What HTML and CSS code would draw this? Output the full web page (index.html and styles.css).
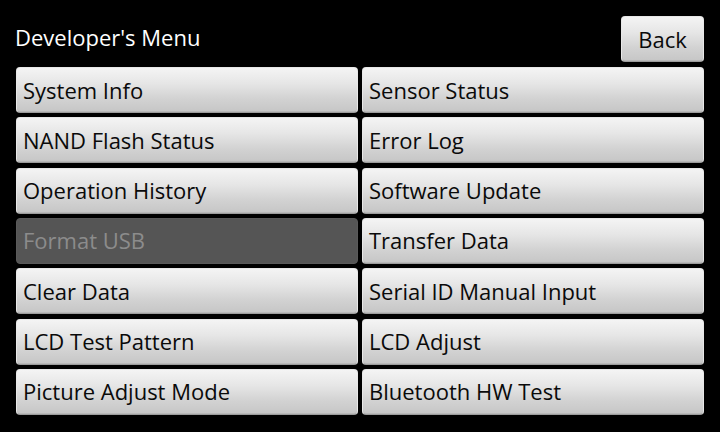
FILE: index.html
```html
<!DOCTYPE html>
<html>
<head>
<meta charset="utf-8">
<link rel="stylesheet" href="styles.css">
</head>
<body>
<div class="screen">
  <div class="header">
    <div class="title">Developer's Menu</div>
    <div class="btn back">Back</div>
  </div>
  <div class="grid">
    <div class="btn item">System Info</div>
    <div class="btn item">Sensor Status</div>
    <div class="btn item">NAND Flash Status</div>
    <div class="btn item">Error Log</div>
    <div class="btn item">Operation History</div>
    <div class="btn item">Software Update</div>
    <div class="btn item disabled">Format USB</div>
    <div class="btn item">Transfer Data</div>
    <div class="btn item">Clear Data</div>
    <div class="btn item">Serial ID Manual Input</div>
    <div class="btn item">LCD Test Pattern</div>
    <div class="btn item">LCD Adjust</div>
    <div class="btn item">Picture Adjust Mode</div>
    <div class="btn item">Bluetooth HW Test</div>
  </div>
</div>
</body>
</html>
```
FILE: styles.css
```css
html, body {
  margin: 0;
  padding: 0;
  background: #000;
}
body {
  width: 720px;
  height: 432px;
  overflow: hidden;
  font-family: "Open Sans", "Noto Sans", sans-serif;
}
.screen {
  padding: 16px 16px 0 16px;
  display: flex;
  flex-direction: column;
  gap: 5px;
}
.header {
  height: 46px;
  display: flex;
  align-items: center;
  justify-content: space-between;
}
.title {
  color: #fff;
  font-size: 22px;
  margin-left: -1px;
  margin-top: -4px;
}
.btn {
  box-sizing: border-box;
  border-radius: 4px;
  background: linear-gradient(to bottom, #f4f4f4 0%, #e6e6e6 35%, #d2d2d2 70%, #c6c6c6 100%);
  border: 1px solid #e8e8e8;
  border-bottom-color: #9c9c9c;
  box-shadow: inset 0 -1px 0 #b8b8b8;
  color: #0a0a0a;
  font-size: 22px;
  display: flex;
  align-items: center;
}
.back {
  width: 83px;
  height: 46px;
  justify-content: center;
  padding-bottom: 1px;
}
.grid {
  display: grid;
  grid-template-columns: 342px 342px;
  grid-auto-rows: 46px;
  column-gap: 4px;
  row-gap: 4.33px;
}
.item {
  padding-left: 6px;
  padding-bottom: 1px;
}
.disabled {
  background: #555;
  border-color: #5a5a5a;
  box-shadow: none;
  color: #8c8c8c;
}
```
